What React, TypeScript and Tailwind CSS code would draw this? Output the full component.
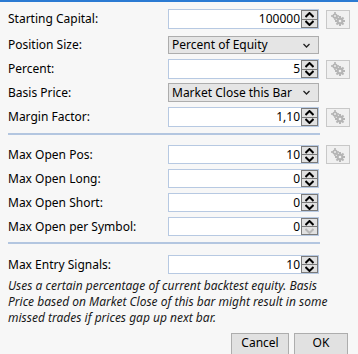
import React from "react";

const font = { fontFamily: '"Segoe UI", "Noto Sans", "Liberation Sans", sans-serif' };

function Spinner({ downDisabled }: { downDisabled?: boolean }) {
  return (
    <div className="flex h-full w-[17px] flex-col border border-[#7a7a7a] bg-[#e1e1e1]">
      <div className="flex flex-1 items-center justify-center border-b border-[#7a7a7a]">
        <svg width="9" height="6" viewBox="0 0 9 6">
          <path d="M0.5 5 L4.5 1 L8.5 5" fill="none" stroke="#000" strokeWidth="2" />
        </svg>
      </div>
      <div className="flex flex-1 items-center justify-center">
        <svg width="9" height="6" viewBox="0 0 9 6">
          <path d="M0.5 1 L4.5 5 L8.5 1" fill="none" stroke={downDisabled ? "#b8b8b8" : "#000"} strokeWidth="2" />
        </svg>
      </div>
    </div>
  );
}

function Gear() {
  return (
    <div className="ml-[7px] flex h-[19px] w-[24px] items-center justify-center border border-[#c8c8c8] bg-[#f0f0f0]">
      <svg width="16" height="14" viewBox="0 0 16 14">
        <g fill="#b5b5b5">
          <circle cx="5" cy="4" r="2.6" />
          <rect x="4.2" y="0" width="1.6" height="8" />
          <rect x="1" y="3.2" width="8" height="1.6" />
          <circle cx="10" cy="9" r="3.4" />
          <rect x="9" y="4" width="2" height="10" />
          <rect x="5" y="8" width="10" height="2" />
          <rect x="9" y="4" width="2" height="10" transform="rotate(45 10 9)" />
          <rect x="9" y="4" width="2" height="10" transform="rotate(-45 10 9)" />
        </g>
        <circle cx="10" cy="9" r="1.3" fill="#f0f0f0" />
        <circle cx="5" cy="4" r="0.9" fill="#f0f0f0" />
      </svg>
    </div>
  );
}

function NumInput({ value, h = 20, gear, downDisabled }: { value: string; h?: number; gear?: boolean; downDisabled?: boolean }) {
  return (
    <div className="flex items-center">
      <div
        className={`flex w-[151px] items-stretch border border-[#b7c9e2] bg-white ${h === 20 ? "h-[20px]" : "h-[19px]"}`}
      >
        <div className="flex flex-1 items-center justify-end pr-[1px] text-[12px] text-black">{value}</div>
        <Spinner downDisabled={downDisabled} />
      </div>
      {gear && <Gear />}
    </div>
  );
}

function Select({ value, h = 18 }: { value: string; h?: number }) {
  return (
    <div
      className={`flex w-[151px] items-center justify-between border border-[#adadad] bg-[#e5e5e5] pl-[3px] pr-[8px] text-[12px] text-black ${h === 18 ? "h-[18px]" : "h-[19px]"}`}
    >
      <span>{value}</span>
      <svg width="7" height="5" viewBox="0 0 7 5">
        <path d="M0.5 1 L3.5 4 L6.5 1" fill="none" stroke="#222" strokeWidth="1.3" />
      </svg>
    </div>
  );
}

function Row({ label, children, className = "" }: { label: string; children: React.ReactNode; className?: string }) {
  return (
    <div className={`flex items-center ${className}`}>
      <div className="w-[160px] text-[12px] text-black">{label}</div>
      {children}
    </div>
  );
}

export default function App() {
  return (
    <div className="h-[354px] w-[358px] overflow-hidden border-t-2 border-[#2b7bd3] bg-[#f7f7f7]" style={font}>
      <div className="flex flex-col pl-[8px] pt-[7px]">
        <Row label="Starting Capital:">
          <NumInput value="100000" gear />
        </Row>
        <Row label="Position Size:" className="mt-[7px]">
          <Select value="Percent of Equity" />
        </Row>
        <Row label="Percent:" className="mt-[5px]">
          <NumInput value="5" gear />
        </Row>
        <Row label="Basis Price:" className="mt-[4px]">
          <Select value="Market Close this Bar" h={19} />
        </Row>
        <Row label="Margin Factor:" className="mt-[5px]">
          <NumInput value="1,10" gear />
        </Row>
        <div className="mt-[6px] h-[2px] w-[312px] bg-[#b3c6e0]" />
        <Row label="Max Open Pos:" className="mt-[10px]">
          <NumInput value="10" h={19} gear />
        </Row>
        <Row label="Max Open Long:" className="mt-[5px]">
          <NumInput value="0" h={19} />
        </Row>
        <Row label="Max Open Short:" className="mt-[5px]">
          <NumInput value="0" h={19} />
        </Row>
        <Row label="Max Open per Symbol:" className="mt-[5px]">
          <NumInput value="0" h={19} downDisabled />
        </Row>
        <div className="mt-[6px] h-[2px] w-[312px] bg-[#b3c6e0]" />
        <Row label="Max Entry Signals:" className="mt-[11px]">
          <NumInput value="10" h={19} />
        </Row>
        <p className="mt-[4px] text-[12px] italic leading-[16px] text-[#1a1a1a]">
          Uses a certain percentage of current backtest equity. Basis
          <br />
          Price based on Market Close of this bar might result in some
          <br />
          missed trades if prices gap up next bar.
        </p>
        <div className="mt-[7px] flex justify-end pr-[10px]">
          <button className="h-[23px] w-[58px] border border-[#adadad] bg-[#e1e1e1] pb-[3px] text-[12px] text-black">
            Cancel
          </button>
          <button className="ml-[5px] h-[23px] w-[54px] border border-[#adadad] bg-[#e1e1e1] pb-[3px] text-[12px] text-black">
            OK
          </button>
        </div>
      </div>
    </div>
  );
}
